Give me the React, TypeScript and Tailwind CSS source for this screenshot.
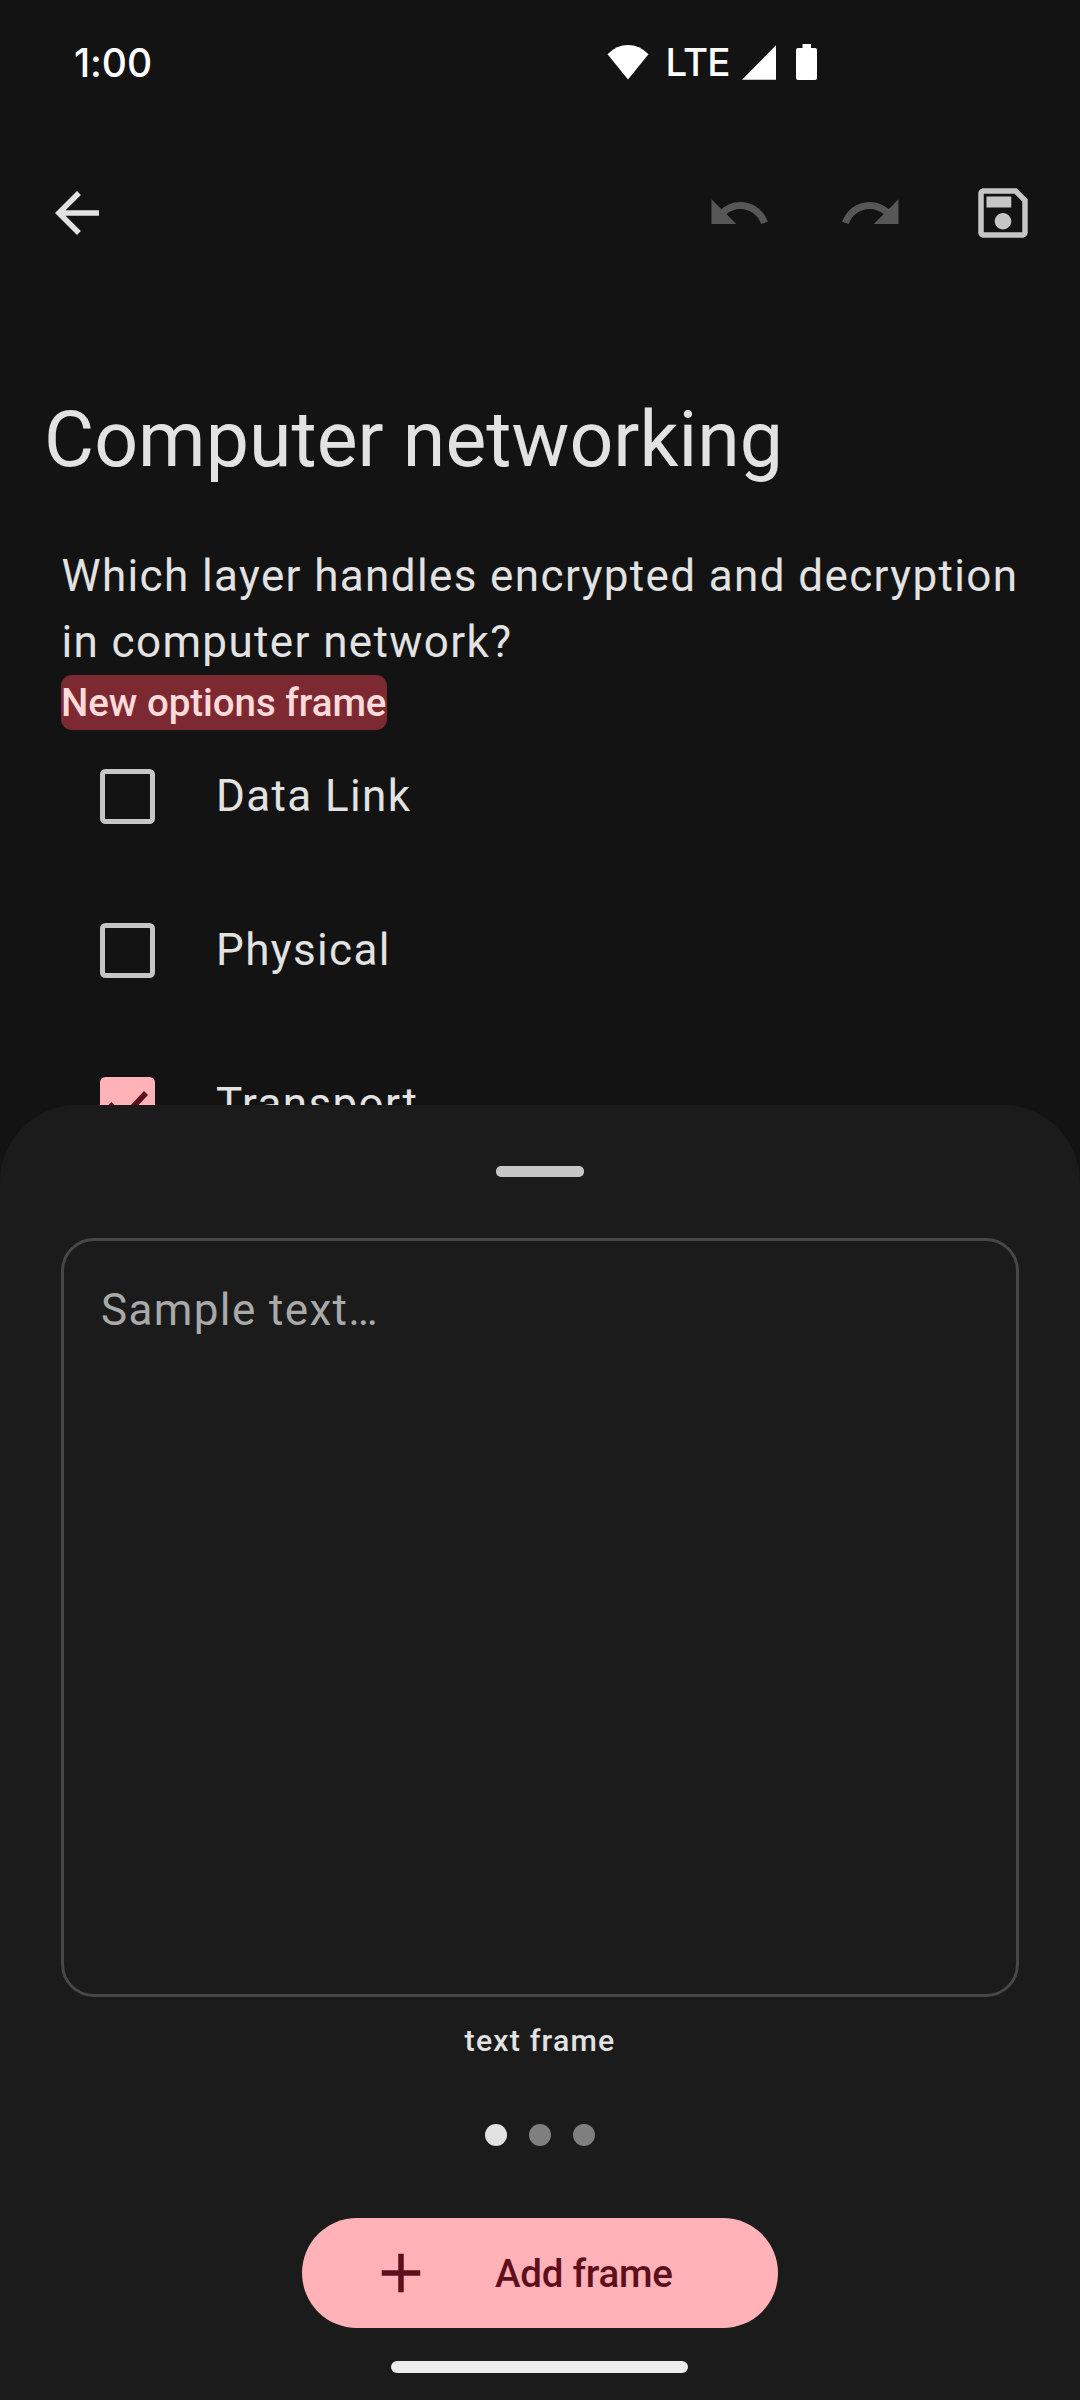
import type { ReactNode } from "react";

function Icon({ d, className = "" }: { d: string; className?: string }) {
  return (
    <svg viewBox="0 0 24 24" className={`size-[66px] shrink-0 fill-current ${className}`} aria-hidden="true">
      <path d={d} />
    </svg>
  );
}

const ICONS = {
  back: "M20 11H7.83l5.59-5.59L12 4l-8 8 8 8 1.41-1.41L7.83 13H20v-2z",
  undo: "M12.5 8c-2.65 0-5.05.99-6.9 2.6L2 7v9h9l-3.62-3.62c1.39-1.16 3.16-1.88 5.12-1.88 3.54 0 6.55 2.31 7.6 5.5l2.37-.78C21.08 11.03 17.15 8 12.5 8z",
  redo: "M18.4 10.6C16.55 8.99 14.15 8 11.5 8c-4.65 0-8.58 3.03-9.96 7.22L3.9 16c1.05-3.19 4.05-5.5 7.6-5.5 1.95 0 3.73.72 5.12 1.88L13 16h9V7l-3.6 3.6z",
  save: "M17 3H5c-1.11 0-2 .9-2 2v14c0 1.1.89 2 2 2h14c1.1 0 2-.9 2-2V7l-4-4zm2 16H5V5h11.17L19 7.83V19zm-7-7c-1.66 0-3 1.34-3 3s1.34 3 3 3 3-1.34 3-3-1.34-3-3-3zM6 6h9v4H6V6z",
  add: "M19 13h-6v6h-2v-6H5v-2h6V5h2v6h6v2z",
};

function StatusBar() {
  return (
    <div className="flex h-[125px] items-start pt-[42px] text-white">
      <span className="ml-[74px] w-[533px] pt-px font-['Inter'] text-[39px] leading-[40px] font-medium tracking-[-0.1px]">1:00</span>
      <svg className="mt-[3px] h-[35px] w-[42px] fill-white" viewBox="0 0 42 35" aria-hidden="true">
        <path d="M21 34.5 0.5 9.2Q9.5 0 21 0T41.5 9.2Z" />
      </svg>
      <span className="ml-[16.500px] w-[76.500px] font-['Inter'] text-[38.500px] leading-[40px] font-medium tracking-[-0.700px]">LTE</span>
      <svg className="mt-[3px] h-[35px] w-[34px] fill-white" viewBox="0 0 34 35" aria-hidden="true">
        <path d="M0 34.7 34 0.3V34.7Z" />
      </svg>
      <svg className="mt-[2px] ml-[20px] h-[36px] w-[21px] fill-white" viewBox="0 0 21 36" aria-hidden="true">
        <path d="M6.500 0h8.500v4h4q2 0 2 2v28q0 2-2 2H2q-2 0-2-2V6q0-2 2-2h4.500z" />
      </svg>
    </div>
  );
}

function IconButton({ label, children }: { label: string; children: ReactNode }) {
  return (
    <button aria-label={label} className="flex size-[132px] items-center justify-center">
      {children}
    </button>
  );
}

function Option({ label, checked = false }: { label: string; checked?: boolean }) {
  return (
    <div className="flex h-[154px] items-start pl-[39px]">
      {checked ? (
        <span className="flex size-[55px] rounded-[5.5px] bg-[#ffb3b8]">
          <svg viewBox="0 0 55 55" className="size-[55px] fill-none stroke-[#5f0f1c]" strokeWidth="5.5" aria-hidden="true">
            <path d="m9.500 27 13.500 13.500 23-24.500" />
          </svg>
        </span>
      ) : (
        <span className="size-[55px] rounded-[5.5px] border-5 border-[#c6c6c6]" />
      )}
      <span className="-mt-[6px] ml-[61.500px] text-[44px] leading-[66px] tracking-[1.375px]">{label}</span>
    </div>
  );
}

export default function App() {
  return (
    <div className="relative h-[2400px] w-[1080px] overflow-hidden bg-[#131313] font-['Roboto',sans-serif] text-[#e2e2e2]">
      <StatusBar />
      <header>
        <div className="flex h-[176px] items-center px-[11px]">
          <IconButton label="Back">
            <Icon d={ICONS.back} />
          </IconButton>
          <div className="ml-auto flex">
            <IconButton label="Undo">
              <Icon d={ICONS.undo} className="text-[#575757]" />
            </IconButton>
            <IconButton label="Redo">
              <Icon d={ICONS.redo} className="text-[#575757]" />
            </IconButton>
            <IconButton label="Save">
              <Icon d={ICONS.save} className="text-[#c6c6c6]" />
            </IconButton>
          </div>
        </div>
        <h1 className="mt-[90px] ml-[44px] text-[77px] leading-[99px] tracking-[0.040px]">Computer networking</h1>
      </header>
      <main className="px-[60.500px] pt-[53px]">
        <p className="w-[980px] pl-px text-[44px] leading-[66px] tracking-[1.375px]">
          Which layer handles encrypted and decryption
          <br />
          in computer network?
        </p>
        <div className="flex h-[55px] w-[326px] items-center rounded-[11px] bg-[#7d2932] pl-[0.500px] text-[38.500px] leading-[55px] font-medium tracking-[-0.050px] whitespace-nowrap text-[#ffdadb]">
          New options frame
        </div>
        <div className="mt-[39px]">
          <Option label="Data Link" />
          <Option label="Physical" />
          <Option label="Transport" checked />
        </div>
      </main>
      <section className="absolute inset-x-0 bottom-0 flex h-[1295px] flex-col items-center rounded-t-[77px] bg-[#1b1b1b]">
        <div className="mt-[61px] h-[11px] w-[88px] rounded-[5px] bg-[#c6c6c6]" />
        <div className="mt-[61px] h-[759px] w-[958px] rounded-[33px] border-3 border-[#474747] px-[37px] pt-[36px] text-[44px] leading-[66px] tracking-[1.375px] text-[#a9a9a9]">
          Sample text…
        </div>
        <div className="mt-[22px] text-[30.250px] leading-[44px] font-medium tracking-[1.200px]">text frame</div>
        <div className="mt-[61px] flex gap-[22px]">
          <span className="size-[22px] rounded-full bg-[#e2e2e2]" />
          <span className="size-[22px] rounded-full bg-[#7f7f7f]" />
          <span className="size-[22px] rounded-full bg-[#7f7f7f]" />
        </div>
        <button className="mt-[72px] flex h-[110px] w-[476px] items-center rounded-full bg-[#ffb3b8] pl-[66px] text-[38.500px] leading-[55px] font-medium text-[#5f0f1c]">
          <Icon d={ICONS.add} />
          <span className="ml-[61px] tracking-[-0.250px] whitespace-nowrap">Add frame</span>
        </button>
        <div className="mt-[33px] mr-px h-[11.500px] w-[297px] rounded-full bg-[#ececec]" />
      </section>
    </div>
  );
}
